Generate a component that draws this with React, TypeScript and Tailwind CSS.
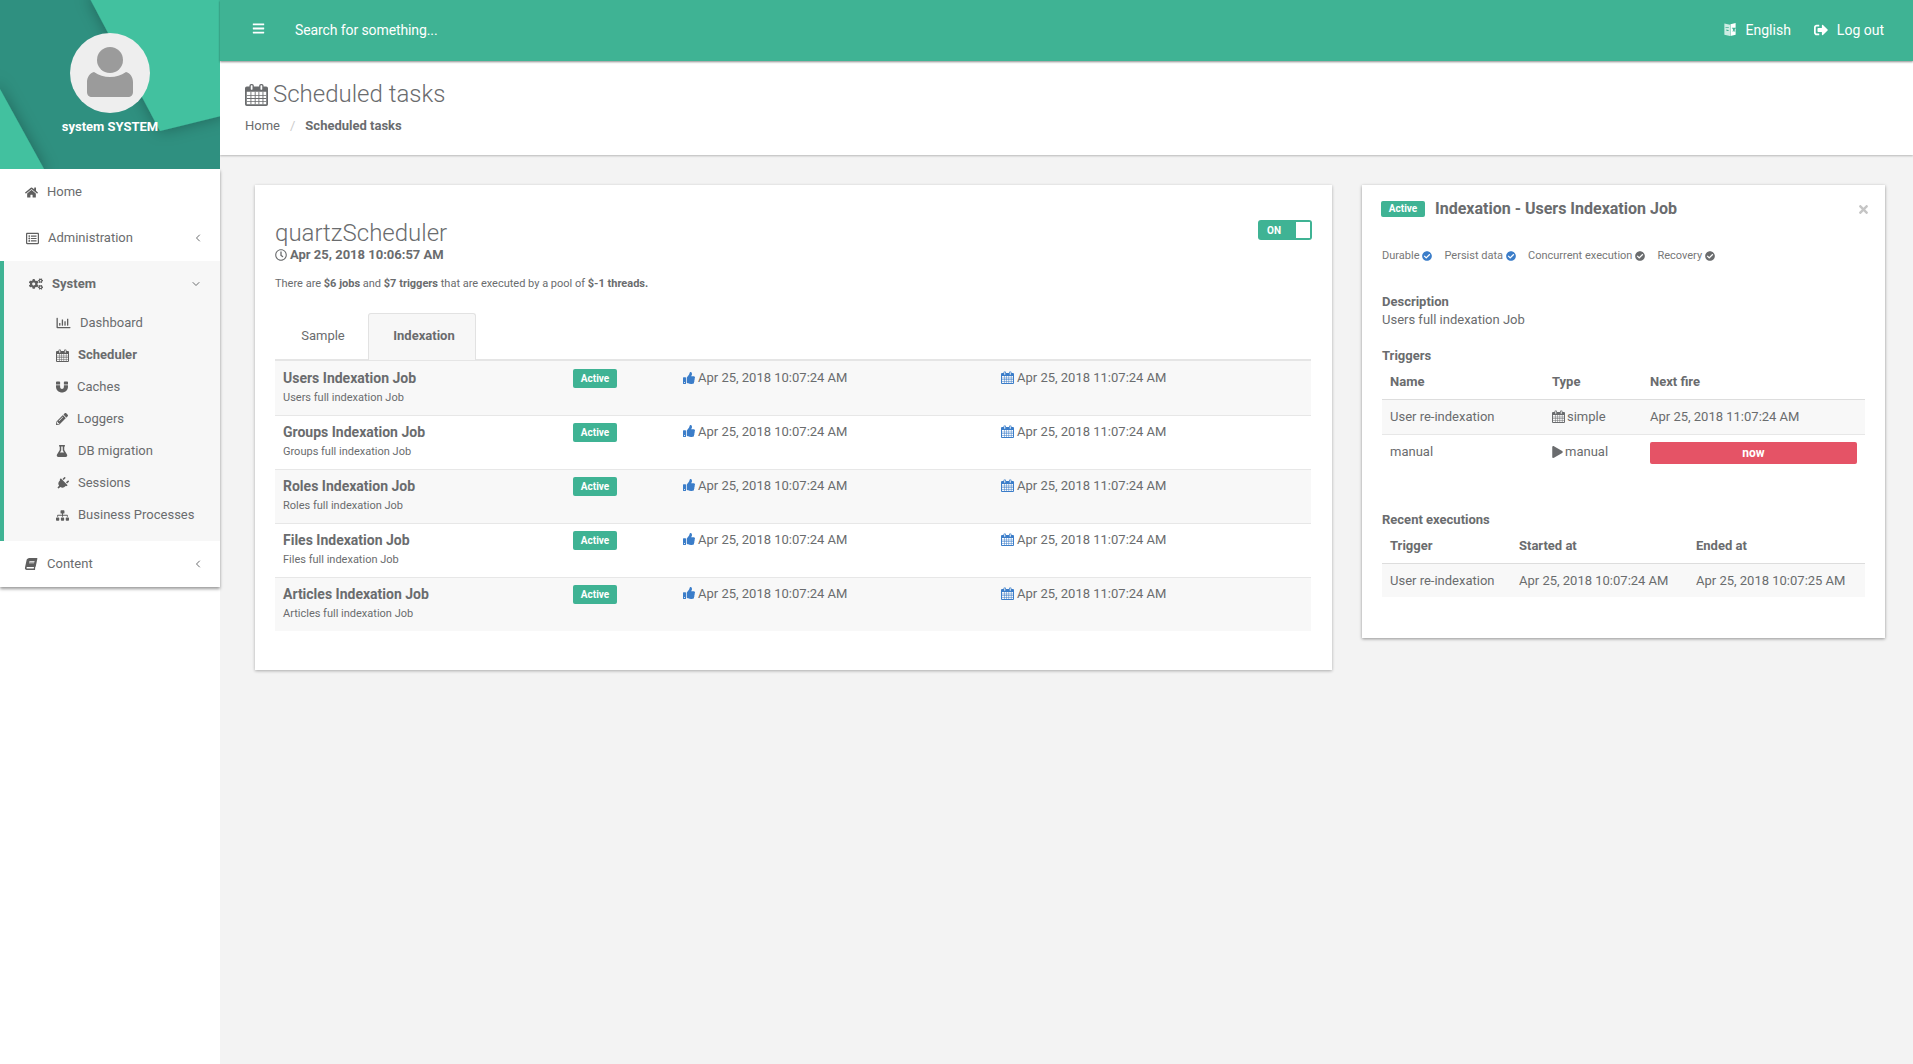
import React from 'react';
import {
  FaBars, FaBook, FaCheckCircle, FaCogs, FaFlask, FaHome, FaMagnet, FaPencilAlt, FaPlay, FaPlug,
  FaRegChartBar, FaRegClock, FaRegListAlt, FaSignOutAlt, FaSitemap, FaThumbsUp, FaTimes,
} from 'react-icons/fa';
import { FiChevronDown, FiChevronLeft } from 'react-icons/fi';

const jobs = ['Users', 'Groups', 'Roles', 'Files', 'Articles'];

// the old font-awesome calendar, react-icons only ships the newer one
function CalendarIcon({ className }: { className?: string }) {
  return (
    <svg className={className} viewBox="0 0 26 26" fill="currentColor">
      <path fillRule="evenodd" d="M2 4h3V3a2 2 0 0 1 2-2h1a2 2 0 0 1 2 2v1h6V3a2 2 0 0 1 2-2h1a2 2 0 0 1 2 2v1h3a2 2 0 0 1 2 2v18a2 2 0 0 1-2 2H2a2 2 0 0 1-2-2V6a2 2 0 0 1 2-2zM7 2.500a.5.5 0 0 0-.5.5v4a.5.5 0 0 0 .5.5h1a.5.5 0 0 0 .5-.5V3a.5.5 0 0 0-.5-.5zM18 2.500a.5.5 0 0 0-.5.5v4a.5.5 0 0 0 .5.5h1a.5.5 0 0 0 .5-.5V3a.5.5 0 0 0-.5-.5zM2 10v14h22V10z" />
      <path d="M6.200 10h1v14h-1zM11 10h1v14h-1zM15.200 10h1v14h-1zM19.800 10h1v14h-1zM2 13.500h22v1H2zM2 17h22v1H2zM2 20.500h22v1H2z" />
    </svg>
  );
}

function LanguageIcon({ className }: { className?: string }) {
  return (
    <svg className={className} viewBox="0 0 14 16" fill="currentColor">
      <path fillRule="evenodd" d="M1 1.500 7 3v12l-6-1.500zM2.200 5.500v1h3.500v-1zM3 8v1c1 .5 1.700.6 2.500.5V8.500C4.500 8.600 3.800 8.400 3 8z" opacity="0.75" />
      <path d="M7.500 2.500 13 1v12.500L7.500 15zM9 6v1h.8c.1.800.4 1.400.8 1.900l-1 .7.500.7 1.100-.8 1 .8.500-.7-1-.8c.4-.5.7-1.100.8-1.800h.5V6z" />
    </svg>
  );
}

const subItems = [
  { label: 'Dashboard', icon: FaRegChartBar, cls: 'h-[14px] w-[15px] mr-[9px]', bold: false },
  { label: 'Scheduler', icon: CalendarIcon, cls: 'h-[13px] w-[13px] mr-[9px]', bold: true },
  { label: 'Caches', icon: FaMagnet, cls: 'h-[12px] w-[12px] mr-[9px]', bold: false },
  { label: 'Loggers', icon: FaPencilAlt, cls: 'h-[12px] w-[12px] mr-[9px]', bold: false },
  { label: 'DB migration', icon: FaFlask, cls: 'h-[12px] w-[12px] mr-[10px]', bold: false },
  { label: 'Sessions', icon: FaPlug, cls: 'h-[13px] w-[13px] mr-[9px] rotate-45', bold: false },
  { label: 'Business Processes', icon: FaSitemap, cls: 'h-[13px] w-[13px] mr-[9px]', bold: false },
];

function ActiveBadge() {
  return (
    <span className="flex h-[19px] w-11 items-center justify-center rounded-[2px] bg-[#3fb394] text-[10px] font-bold text-white">
      Active
    </span>
  );
}

function Sidebar() {
  return (
    <aside className="z-10 flex w-[220px] shrink-0 flex-col bg-white">
      <div className="relative h-[169px] overflow-hidden bg-[#2f9080]">
        <svg className="absolute inset-0" width="220" height="169" viewBox="0 0 220 169">
          <defs>
            <filter id="edge" x="-30%" y="-30%" width="160%" height="160%">
              <feDropShadow dx="0" dy="0" stdDeviation="8" floodColor="#000000" floodOpacity="0.3" />
            </filter>
          </defs>
          <polygon points="88,-5 225,-5 225,115 160,131" fill="#43c19f" filter="url(#edge)" />
          <polygon points="-5,80 44,169 44,175 -5,175" fill="#43c19f" filter="url(#edge)" />
        </svg>
        <div className="relative flex flex-col items-center pt-[33px]">
          <div className="flex h-20 w-20 items-center justify-center rounded-full bg-[#eeeeee]">
            <svg width="48" height="52" viewBox="0 0 48 52" fill="#9b9b9b">
              <circle cx="24" cy="13" r="13" />
              <path d="M8 25c5 3.500 10 5 16 5s11-1.500 16-5c4 1 7 5 7 10v10c0 3-2 5-5 5H6c-3 0-5-2-5-5V35c0-5 3-9 7-10z" />
            </svg>
          </div>
          <div className="mt-[4px] text-[13px] leading-[20px] font-bold text-white">system SYSTEM</div>
        </div>
      </div>

      <nav className="text-[13px] text-[#6a6c6e] shadow-[0_2px_3px_rgba(0,0,0,0.4)]">
        <div className="flex h-[46px] items-center pl-[25px]">
          <FaHome className="mr-[9px] h-[13px] w-[13px] text-[#5f5f5f]" />
          Home
        </div>
        <div className="flex h-[46px] items-center justify-between pr-[16px] pl-[26px]">
          <span className="flex items-center">
            <FaRegListAlt className="mr-[9px] h-[13px] w-[13px] text-[#5f5f5f]" />
            Administration
          </span>
          <FiChevronLeft className="h-3 w-3" />
        </div>
        <div className="h-[280px] border-l-4 border-[#3fb394] bg-[#f7f7f7]">
          <div className="flex h-[46px] items-center justify-between pr-[18px] pl-[25px] font-bold">
            <span className="flex items-center">
              <FaCogs className="mr-[9px] h-[14px] w-[14px] text-[#5f5f5f]" />
              System
            </span>
            <FiChevronDown className="h-3 w-3" />
          </div>
          <ul className="pl-[52px]">
            {subItems.map((item) => (
              <li key={item.label} className={`flex h-8 items-center ${item.bold ? 'font-bold' : ''}`}>
                <item.icon className={`${item.cls} text-[#5f5f5f]`} />
                {item.label}
              </li>
            ))}
          </ul>
        </div>
        <div className="flex h-[46px] items-center justify-between pr-[16px] pl-[25px]">
          <span className="flex items-center">
            <FaBook className="mr-[10px] h-3 w-3 -skew-x-12 text-[#5f5f5f]" />
            Content
          </span>
          <FiChevronLeft className="h-3 w-3" />
        </div>
      </nav>
    </aside>
  );
}

function Topbar() {
  return (
    <header className="z-10 flex h-[61px] items-center justify-between bg-[#3fb394] pr-[29px] pl-[32px] text-[14px] text-white shadow-[0_1px_2px_rgba(0,0,0,0.45)]">
      <div className="flex items-center">
        <FaBars className="mt-[-4px] h-[13px] w-[13px]" />
        <span className="ml-[30px] tracking-[-0.1px]">Search for something...</span>
      </div>
      <div className="flex items-center">
        <LanguageIcon className="mt-[-2px] mr-[9px] h-[15px] w-[14px]" />
        English
        <FaSignOutAlt className="mt-[-2px] mr-[9px] ml-[23px] h-[14px] w-[14px]" />
        Log out
      </div>
    </header>
  );
}

function JobsCard() {
  return (
    <section className="w-[1077px] bg-white px-[20px] pt-[35px] pb-[39px] shadow-[0_1px_3px_rgba(0,0,0,0.3)]">
      <div className="flex items-start justify-between">
        <div>
          <h2 className="text-[24px] leading-[26px] font-light">quartzScheduler</h2>
          <div className="flex items-center text-[13px] leading-[17px] font-bold">
            <FaRegClock className="mr-[3px] h-3 w-3" />
            Apr 25, 2018 10:06:57 AM
          </div>
        </div>
        <div className="flex h-5 w-[54px] items-center justify-between rounded-[3px] bg-[#3fb394] pr-[2px] pl-[9px] text-[10px] font-bold text-white">
          ON
          <span className="h-4 w-[14px] bg-white" />
        </div>
      </div>
      <p className="mt-[13px] text-[11px] leading-[16px]">
        There are <b>$6 jobs</b> and <b>$7 triggers</b> that are executed by a pool of <b>$-1 threads.</b>
      </p>

      <div className="mt-[21px] flex h-[48px] w-[1036px] border-b-2 border-[#e5e5e5] text-[13px]">
        <div className="flex w-[93px] items-center justify-center pl-[3px]">Sample</div>
        <div className="flex h-[47px] w-[108px] items-center justify-center rounded-t-[3px] border-x border-t border-[#e2e2e2] bg-[#f7f7f7] pb-[2px] pl-[4px] font-bold">
          Indexation
        </div>
      </div>

      <table className="w-[1036px] table-fixed border-collapse">
        <colgroup>
          <col className="w-[298px]" />
          <col className="w-[110px]" />
          <col className="w-[318px]" />
          <col />
        </colgroup>
        <tbody>
          {jobs.map((job, i) => (
            <tr key={job} className={`h-[54px] align-top ${i % 2 === 0 ? 'bg-[#f8f8f8]' : ''} ${i > 0 ? 'border-t border-[#e7e7e7]' : ''}`}>
              <td className={`pl-[8px] ${i === 0 ? 'pt-[8px]' : 'pt-[7px]'}`}>
                <div className="text-[14px] leading-[19px] font-bold">{job} Indexation Job</div>
                <div className="mt-[2px] text-[11px] leading-[16px]">{job} full indexation Job</div>
              </td>
              <td className={i === 0 ? 'pt-[8px]' : 'pt-[7px]'}>
                <ActiveBadge />
              </td>
              <td className={`text-[13px] leading-[19px] ${i === 0 ? 'pt-[7px]' : 'pt-[6px]'}`}>
                <span className="flex items-center">
                  <FaThumbsUp className="mr-[3px] h-[12px] w-[12px] text-[#3b7dc9]" />
                  Apr 25, 2018 10:07:24 AM
                </span>
              </td>
              <td className={`text-[13px] leading-[19px] ${i === 0 ? 'pt-[7px]' : 'pt-[6px]'}`}>
                <span className="flex items-center">
                  <CalendarIcon className="mr-[3px] h-[13px] w-[13px] text-[#3b7dc9]" />
                  Apr 25, 2018 11:07:24 AM
                </span>
              </td>
            </tr>
          ))}
        </tbody>
      </table>
    </section>
  );
}

function Flag({ label, blue, className }: { label: string; blue: boolean; className?: string }) {
  return (
    <span className={`flex items-center ${className ?? ''}`}>
      {label}
      <FaCheckCircle className={`ml-[3px] h-[10px] w-[10px] ${blue ? 'text-[#3b7dc9]' : 'text-[#6a6c6e]'}`} />
    </span>
  );
}

function DetailCard() {
  return (
    <section className="h-[453px] w-[523px] bg-white px-[20px] pt-[10px] shadow-[0_1px_3px_rgba(0,0,0,0.4)]">
      <div className="flex h-[28px] items-center">
        <span className="mt-[-1px] ml-[-1px] flex h-4 w-11 items-center justify-center rounded-[2px] bg-[#3fb394] text-[10px] font-bold text-white">Active</span>
        <h3 className="ml-[10px] text-[16px] font-bold">Indexation - Users Indexation Job</h3>
        <FaTimes className="mr-[-5px] ml-auto h-[13px] w-[13px] text-[#c5c5c5]" />
      </div>
      <div className="mt-[25px] flex h-[16px] items-center text-[11px] text-[#777777]">
        <Flag label="Durable" blue />
        <Flag label="Persist data" blue className="ml-[12px]" />
        <Flag label="Concurrent execution" blue={false} className="ml-[12px]" />
        <Flag label="Recovery" blue={false} className="ml-[12px]" />
      </div>
      <div className="mt-[29px] text-[13px] leading-[18px] font-bold">Description</div>
      <div className="text-[13px] leading-[18px]">Users full indexation Job</div>
      <div className="mt-[18px] text-[13px] leading-[18px] font-bold">Triggers</div>

      <table className="mt-[-1px] w-[483px] table-fixed border-collapse text-[13px]">
        <colgroup>
          <col className="w-[170px]" />
          <col className="w-[98px]" />
          <col />
        </colgroup>
        <thead>
          <tr className="h-[35px] border-b border-[#dddddd] text-left">
            <th className="pl-2 font-bold">Name</th>
            <th className="font-bold">Type</th>
            <th className="font-bold">Next fire</th>
          </tr>
        </thead>
        <tbody>
          <tr className="h-[35px] border-b border-[#e7e7e7] bg-[#f8f8f8]">
            <td className="pl-2">User re-indexation</td>
            <td>
              <span className="flex items-center">
                <CalendarIcon className="mr-[2px] h-[13px] w-[13px]" />
                simple
              </span>
            </td>
            <td>Apr 25, 2018 11:07:24 AM</td>
          </tr>
          <tr className="h-[35px]">
            <td className="pl-2">manual</td>
            <td>
              <span className="flex items-center">
                <FaPlay className="mr-[2px] h-[12px] w-[11px]" />
                manual
              </span>
            </td>
            <td className="pt-[3px] pr-2">
              <div className="flex h-[22px] items-center justify-center rounded-[2px] bg-[#e55366] text-[12px] font-bold text-white">now</div>
            </td>
          </tr>
        </tbody>
      </table>

      <div className="mt-[42px] text-[13px] leading-[18px] font-bold">Recent executions</div>
      <table className="mt-[-1px] w-[483px] table-fixed border-collapse text-[13px]">
        <colgroup>
          <col className="w-[137px]" />
          <col className="w-[177px]" />
          <col />
        </colgroup>
        <thead>
          <tr className="h-[35px] border-b border-[#dddddd] text-left">
            <th className="pl-2 font-bold">Trigger</th>
            <th className="font-bold">Started at</th>
            <th className="font-bold">Ended at</th>
          </tr>
        </thead>
        <tbody>
          <tr className="h-[34px] bg-[#f8f8f8]">
            <td className="pl-2">User re-indexation</td>
            <td>Apr 25, 2018 10:07:24 AM</td>
            <td>Apr 25, 2018 10:07:25 AM</td>
          </tr>
        </tbody>
      </table>
    </section>
  );
}

export default function App() {
  return (
    <div className="flex min-h-[1064px] bg-[#f3f3f3] font-['Roboto',sans-serif] text-[#6a6c6e]">
      <Sidebar />
      <div className="flex min-w-0 flex-1 flex-col">
        <Topbar />
        <div className="h-[94px] bg-white px-[25px] pt-[17px] shadow-[0_1px_2px_rgba(0,0,0,0.25)]">
          <h1 className="flex items-center text-[24px] leading-[32px] font-light">
            <CalendarIcon className="mr-[5px] h-[23px] w-[23px]" />
            Scheduled tasks
          </h1>
          <div className="mt-[6px] flex text-[13px] leading-[20px]">
            <span>Home</span>
            <span className="mx-[10px] text-[#cccccc]">/</span>
            <b>Scheduled tasks</b>
          </div>
        </div>
        <main className="flex items-start gap-[30px] pt-[30px] pl-[35px]">
          <JobsCard />
          <DetailCard />
        </main>
      </div>
    </div>
  );
}
